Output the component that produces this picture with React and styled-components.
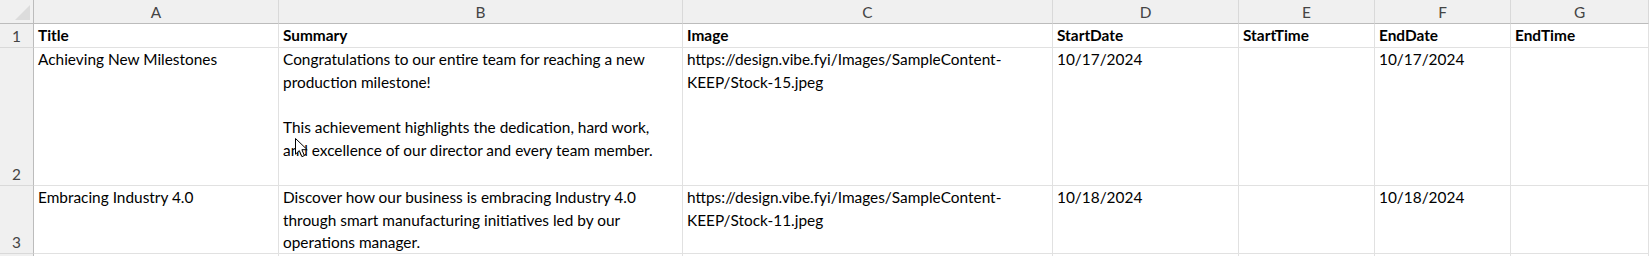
import React from 'react';
import styled, { createGlobalStyle } from 'styled-components';

const GlobalStyle = createGlobalStyle`
  html, body {
    margin: 0;
    padding: 0;
    background: #ffffff;
    overflow: hidden;
  }
`;

const COLUMNS = [
  { letter: 'A', width: 245 },
  { letter: 'B', width: 404 },
  { letter: 'C', width: 370 },
  { letter: 'D', width: 186 },
  { letter: 'E', width: 136 },
  { letter: 'F', width: 136 },
  { letter: 'G', width: 138 },
];

const ROWS = [
  {
    height: 24,
    header: true,
    cells: [['Title'], ['Summary'], ['Image'], ['StartDate'], ['StartTime'], ['EndDate'], ['EndTime']],
  },
  {
    height: 138,
    cells: [
      ['Achieving New Milestones'],
      [
        'Congratulations to our entire team for reaching a new',
        'production milestone!',
        '',
        'This achievement highlights the dedication, hard work,',
        'and excellence of our director and every team member.',
      ],
      ['https://design.vibe.fyi/Images/SampleContent-', 'KEEP/Stock-15.jpeg'],
      ['10/17/2024'],
      [],
      ['10/17/2024'],
      [],
    ],
  },
  {
    height: 68,
    cells: [
      ['Embracing Industry 4.0'],
      [
        'Discover how our business is embracing Industry 4.0',
        'through smart manufacturing initiatives led by our',
        'operations manager.',
      ],
      ['https://design.vibe.fyi/Images/SampleContent-', 'KEEP/Stock-11.jpeg'],
      ['10/18/2024'],
      [],
      ['10/18/2024'],
      [],
    ],
  },
  // only the top sliver of row 4 is in view
  { height: 2, partial: true, cells: [[], [], [], [], [], [], []] },
];

const Sheet = styled.div`
  position: relative;
  display: grid;
  grid-template-columns: 34px ${COLUMNS.map((c) => `${c.width}px`).join(' ')};
  grid-template-rows: 24px ${ROWS.map((r) => `${r.height}px`).join(' ')};
  width: max-content;
  font-family: Lato, 'Liberation Sans', sans-serif;
  font-size: 15.4px;
  color: #000000;
`;

const Corner = styled.div`
  position: relative;
  box-sizing: border-box;
  background: #f0f0f0;
  border-right: 1px solid #bcbcbc;
  border-bottom: 1px solid #bcbcbc;

  &::after {
    content: '';
    position: absolute;
    right: 3px;
    bottom: 3px;
    width: 0;
    height: 0;
    border-left: 15px solid transparent;
    border-bottom: 15px solid #dcdcdc;
  }
`;

const ColumnHeader = styled.div`
  box-sizing: border-box;
  display: flex;
  align-items: center;
  justify-content: center;
  background: #f0f0f0;
  border-right: 1px solid #d9d9d9;
  border-bottom: 1px solid #bcbcbc;
  color: #444444;
  font-size: 15.4px;
`;

const RowHeader = styled.div`
  box-sizing: border-box;
  display: flex;
  align-items: flex-end;
  justify-content: center;
  background: #f0f0f0;
  border-right: 1px solid #bcbcbc;
  border-bottom: ${(p) => (p.$partial ? 'none' : '1px solid #d9d9d9')};
  color: #444444;
  font-size: 15.4px;
  line-height: 22px;
  overflow: hidden;
`;

const Cell = styled.div`
  box-sizing: border-box;
  padding: 0 3px 0 4px;
  border-right: 1px solid #e1e1e1;
  border-bottom: ${(p) => (p.$partial ? 'none' : '1px solid #e1e1e1')};
  font-weight: ${(p) => (p.$bold ? 700 : 400)};
  line-height: 22.7px;
  white-space: pre;
  overflow: hidden;
`;

const Line = styled.div`
  height: 22.7px;
`;

const Pointer = styled.svg`
  position: absolute;
  left: 295px;
  top: 138px;
  pointer-events: none;
`;

export default function App() {
  return (
    <>
      <GlobalStyle />
      <Sheet>
        <Corner />
        {COLUMNS.map((c) => (
          <ColumnHeader key={c.letter}>{c.letter}</ColumnHeader>
        ))}
        {ROWS.map((row, r) => (
          <React.Fragment key={r}>
            <RowHeader $partial={row.partial}>{row.partial ? null : r + 1}</RowHeader>
            {row.cells.map((lines, i) => (
              <Cell key={i} $bold={row.header} $partial={row.partial}>
                {lines.map((text, j) => (
                  <Line key={j}>{text}</Line>
                ))}
              </Cell>
            ))}
          </React.Fragment>
        ))}
        <Pointer width="14" height="20" viewBox="0 0 14 20">
          <path
            d="M0.5 0.5 L0.5 16.2 L4.3 12.6 L6.9 18.7 L9.4 17.6 L6.9 11.7 L12.2 11.7 Z"
            fill="#ffffff"
            stroke="#000000"
            strokeWidth="1"
            strokeLinejoin="miter"
          />
        </Pointer>
      </Sheet>
    </>
  );
}
